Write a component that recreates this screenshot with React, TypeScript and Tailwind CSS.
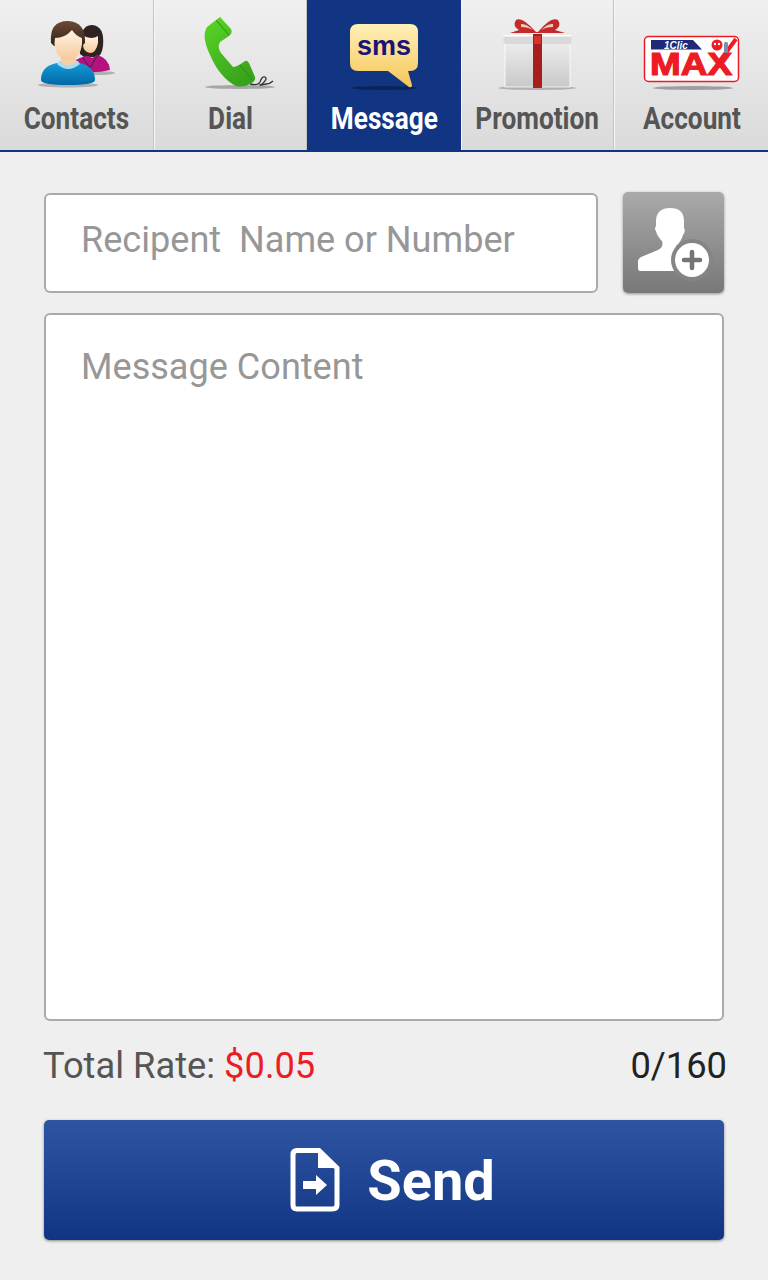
import React from "react";

const ContactsIcon = () => (
  <svg width="120" height="90" viewBox="17 5 120 90">
    <defs>
      <linearGradient id="hairA" x1="0" y1="0" x2="0" y2="1">
        <stop offset="0" stopColor="#6d4a35" />
        <stop offset="1" stopColor="#33221a" />
      </linearGradient>
      <linearGradient id="skinA" x1="0" y1="0" x2="0" y2="1">
        <stop offset="0" stopColor="#fff3e2" />
        <stop offset="1" stopColor="#f6c99a" />
      </linearGradient>
      <linearGradient id="shirtA" x1="0" y1="0" x2="0" y2="1">
        <stop offset="0" stopColor="#159ad6" />
        <stop offset="1" stopColor="#0068a8" />
      </linearGradient>
    </defs>
    <ellipse cx="97" cy="73" rx="18" ry="2" fill="#9a9a9a" opacity="0.7" />
    <ellipse cx="68" cy="85" rx="30" ry="2.5" fill="#9a9a9a" opacity="0.7" />
    <path d="M80 54 Q78 25 92 25 Q105 26 103 46 Q102 54 98 57 L84 57Z" fill="#2e2320" />
    <path d="M76 60 Q86 55 89 56 L92 58 L97 55 Q109 58 110 70 Q98 73 84 72Z" fill="#b3127f" />
    <path d="M83 58 L90 68 L97 56" fill="none" stroke="#2d2a4a" strokeWidth="1" />
    <path d="M84 36 Q92 40 98 36 L98 43 Q96 53 90 53 Q83 52 83 44Z" fill="url(#skinA)" />
    <path d="M41 80 Q41 66 57 63 L80 63 Q95 67 95 80 Q95 85 68 85 Q41 85 41 80Z" fill="url(#shirtA)" />
    <path d="M57 64 Q68 74 80 64 L78 61 L59 61Z" fill="#a9def2" />
    <path d="M61 55 L76 55 L76 62 Q68 69 61 62Z" fill="#f6cfa6" />
    <path d="M51 43 Q49 21 68 21 Q86 22 85 43 L82 46 L54 46Z" fill="url(#hairA)" />
    <path d="M55 38 Q65 38 72 30 Q76 36 82 38 L82 44 Q80 60 68 60 Q56 59 54.500 44Z" fill="url(#skinA)" />
  </svg>
);

const DialIcon = () => (
  <svg width="120" height="90" viewBox="170 5 120 90">
    <defs>
      <linearGradient id="phoneA" x1="0" y1="0" x2="0.6" y2="1">
        <stop offset="0" stopColor="#5bd727" />
        <stop offset="1" stopColor="#38a31c" />
      </linearGradient>
    </defs>
    <ellipse cx="240" cy="87" rx="35" ry="2" fill="#8c8c8c" opacity="0.7" />
    <path d="M250 84 Q258 86 260 82 Q262 76 265 77 Q268 79 262 84 Q256 86 266 84 Q270 84 273 81" fill="none" stroke="#333" strokeWidth="1.300" />
    <path d="M220 17 L231 29 Q233 33 229 36 L220 42 Q217 47 221 53 L233 67 Q237 67 245 61 Q247 60 249 63 L255 77 Q256 80 252 83 Q244 88 236 86 Q220 78 210 55 Q201 36 207 27Z" fill="url(#phoneA)" />
    <path d="M216 20 L229 35 M240 65 L252 80" stroke="#2c8a18" strokeWidth="1" fill="none" />
  </svg>
);

const SmsIcon = () => (
  <svg width="120" height="90" viewBox="324 5 120 90">
    <defs>
      <linearGradient id="bubbleA" x1="0" y1="0" x2="0" y2="1">
        <stop offset="0" stopColor="#fff0b8" />
        <stop offset="1" stopColor="#f5c658" />
      </linearGradient>
    </defs>
    <ellipse cx="384" cy="88" rx="33" ry="2" fill="#0b2356" />
    <path d="M358 24 H410 Q418 24 418 32 V63 Q418 71 410 71 H408 L412 85 Q412 88 409 87 L388 71 H358 Q350 71 350 63 V32 Q350 24 358 24Z" fill="url(#bubbleA)" />
    <text x="384" y="55" textAnchor="middle" fontFamily="'Liberation Sans',sans-serif" fontWeight="700" fontSize="27" fill="#1a1478">
      sms
    </text>
  </svg>
);

const GiftIcon = () => (
  <svg width="120" height="90" viewBox="478 5 120 90">
    <defs>
      <linearGradient id="boxA" x1="0" y1="0" x2="0" y2="1">
        <stop offset="0" stopColor="#ececec" />
        <stop offset="1" stopColor="#c9c9c9" />
      </linearGradient>
    </defs>
    <ellipse cx="537" cy="88" rx="39" ry="2" fill="#9a9a9a" opacity="0.7" />
    <path d="M536 32 Q522 16 516 20 Q512 26 519 30 L510 33 L565 33 L555 30 Q562 26 558 20 Q551 16 538 32Z" fill="#c22b28" />
    <path d="M521 27 Q528 27 533 30 Q526 23 521 24Z M553 27 Q546 27 541 30 Q548 23 553 24Z" fill="#e8c9c4" />
    <rect x="505" y="43" width="65" height="44" fill="url(#boxA)" stroke="#fff" strokeWidth="0.800" />
    <rect x="503.500" y="35" width="68" height="9" rx="2" fill="#d9d9d9" />
    <rect x="503.500" y="35" width="68" height="1.500" fill="#fff" />
    <rect x="533" y="34" width="9" height="54" fill="#a81e1c" />
    <rect x="534" y="36" width="7" height="8" fill="#d8322d" />
  </svg>
);

const MaxLogo = () => (
  <svg width="120" height="90" viewBox="631 5 120 90">
    <ellipse cx="692" cy="88" rx="40" ry="2" fill="#8c8c8c" opacity="0.8" />
    <rect x="643.500" y="36.500" width="94" height="45" rx="4" fill="#fff" stroke="#ed1c24" strokeWidth="1.500" />
    <path d="M650 40 H692 L701 49.500 H650Z" fill="#1e2a78" />
    <text x="663" y="49" fontFamily="'Liberation Sans',sans-serif" fontWeight="700" fontStyle="italic" fontSize="10" fill="#fff">
      1Clic
    </text>
    <text x="649" y="75" fontFamily="'Liberation Sans',sans-serif" fontWeight="700" fontSize="31" textLength="82" lengthAdjust="spacingAndGlyphs" fill="#ed1c24" stroke="#ed1c24" strokeWidth="1.200">
      MAX
    </text>
    <path d="M718 62 L735 39" stroke="#ed1c24" strokeWidth="4" />
    <circle cx="716" cy="45" r="5.500" fill="#ed1c24" />
    <circle cx="714" cy="44" r="1.200" fill="#fff" />
    <circle cx="718" cy="44" r="1.200" fill="#fff" />
    <rect x="723" y="42" width="4" height="11" rx="1.500" fill="#7b8fa8" />
  </svg>
);

const tabs = [
  { label: "Contacts", icon: <ContactsIcon /> },
  { label: "Dial", icon: <DialIcon /> },
  { label: "Message", icon: <SmsIcon />, active: true },
  { label: "Promotion", icon: <GiftIcon /> },
  { label: "Account", icon: <MaxLogo /> },
];

const AddContactIcon = () => (
  <svg width="101" height="101" viewBox="623 192 101 101">
    <path
      d="M670 208 Q684 208 684 221 L684 228 Q686 231 683 235 Q681 242 676 246 L680 271 H640 Q638 271 638 268 V261 Q638 259 641 257 L658 250 Q664 247 662 241 Q657 236 656 231 Q654 229 656 226 L656 220 Q657 208 670 208Z"
      fill="#fff"
    />
    <circle cx="692" cy="260" r="21" fill="#858585" />
    <circle cx="692" cy="260" r="17" fill="#fff" />
    <path d="M692 252 V268 M684 260 H700" stroke="#757575" strokeWidth="4.500" strokeLinecap="round" />
  </svg>
);

const SendIcon = () => (
  <svg width="50" height="66" viewBox="291 1147 50 66">
    <path
      d="M298 1150.500 H320 L338 1168 V1205 Q338 1209 333 1209 H298 Q294 1209 294 1205 V1154.500 Q294 1150.500 298 1150.500Z"
      fill="none"
      stroke="#fff"
      strokeWidth="5"
    />
    <path d="M319 1150 L339 1168 H319Z" fill="#fff" />
    <path d="M304 1181 H317 V1175 L328 1185 L317 1195 V1189 H304Z" fill="#fff" />
  </svg>
);

export default function App() {
  return (
    <div className="w-[768px] h-[1280px] bg-[#efefef] font-['Roboto',sans-serif] overflow-hidden">
      <nav className="grid grid-cols-5 h-[152px] border-b-2 border-[#113583]">
        {tabs.map((t) => (
          <div
            key={t.label}
            className={
              t.active
                ? "flex flex-col items-center pt-[5px] bg-[#113583] text-white"
                : "flex flex-col items-center pt-[5px] bg-gradient-to-b from-[#f0f0f0] to-[#dadada] text-[#555555] border-l border-r border-l-[#f6f6f6] border-r-[#c4c4c4] first:border-l-0 first:pl-[1px] last:border-r-0"
            }
          >
            {t.icon}
            <span className="mt-[6px] text-[31px] leading-[36px] font-bold scale-x-[0.845] whitespace-nowrap">
              {t.label}
            </span>
          </div>
        ))}
      </nav>

      <main className="px-[44px] pt-[41px]">
        <div className="flex justify-between">
          <div className="w-[554px] h-[100px] bg-white border-2 border-[#aaaaaa] rounded-[6px] flex items-center pl-[35px] pb-[6px] text-[36.100px] text-[#979797] whitespace-pre">
            Recipent  Name or Number
          </div>
          <button className="w-[101px] h-[101px] -mt-px rounded-[5px] bg-gradient-to-b from-[#aaaaaa] to-[#787878] shadow-[0_1px_3px_rgba(0,0,0,0.4)]">
            <AddContactIcon />
          </button>
        </div>

        <div className="mt-[20px] h-[708px] bg-white border-2 border-[#aaaaaa] rounded-[6px] pl-[35px] pt-[31px] text-[36.100px] leading-[42px] text-[#979797]">
          Message Content
        </div>

        <div className="mt-[24px] h-[42px] flex justify-between items-center text-[36.300px] leading-[42px] w-[684px] -ml-px">
          <span className="text-[#555555]">
            Total Rate: <span className="text-[#ed1c24]">$0.05</span>
          </span>
          <span className="text-[#222222]">0/160</span>
        </div>

        <button className="mt-[33px] w-[680px] h-[120px] rounded-[5px] bg-gradient-to-b from-[#2f55a2] to-[#113583] shadow-[0_1px_3px_rgba(0,0,0,0.45)] flex items-center justify-center gap-[27px] pl-[17px] text-white text-[56px] font-bold">
          <SendIcon />
          <span className="pt-[2px]">Send</span>
        </button>
      </main>
    </div>
  );
}
